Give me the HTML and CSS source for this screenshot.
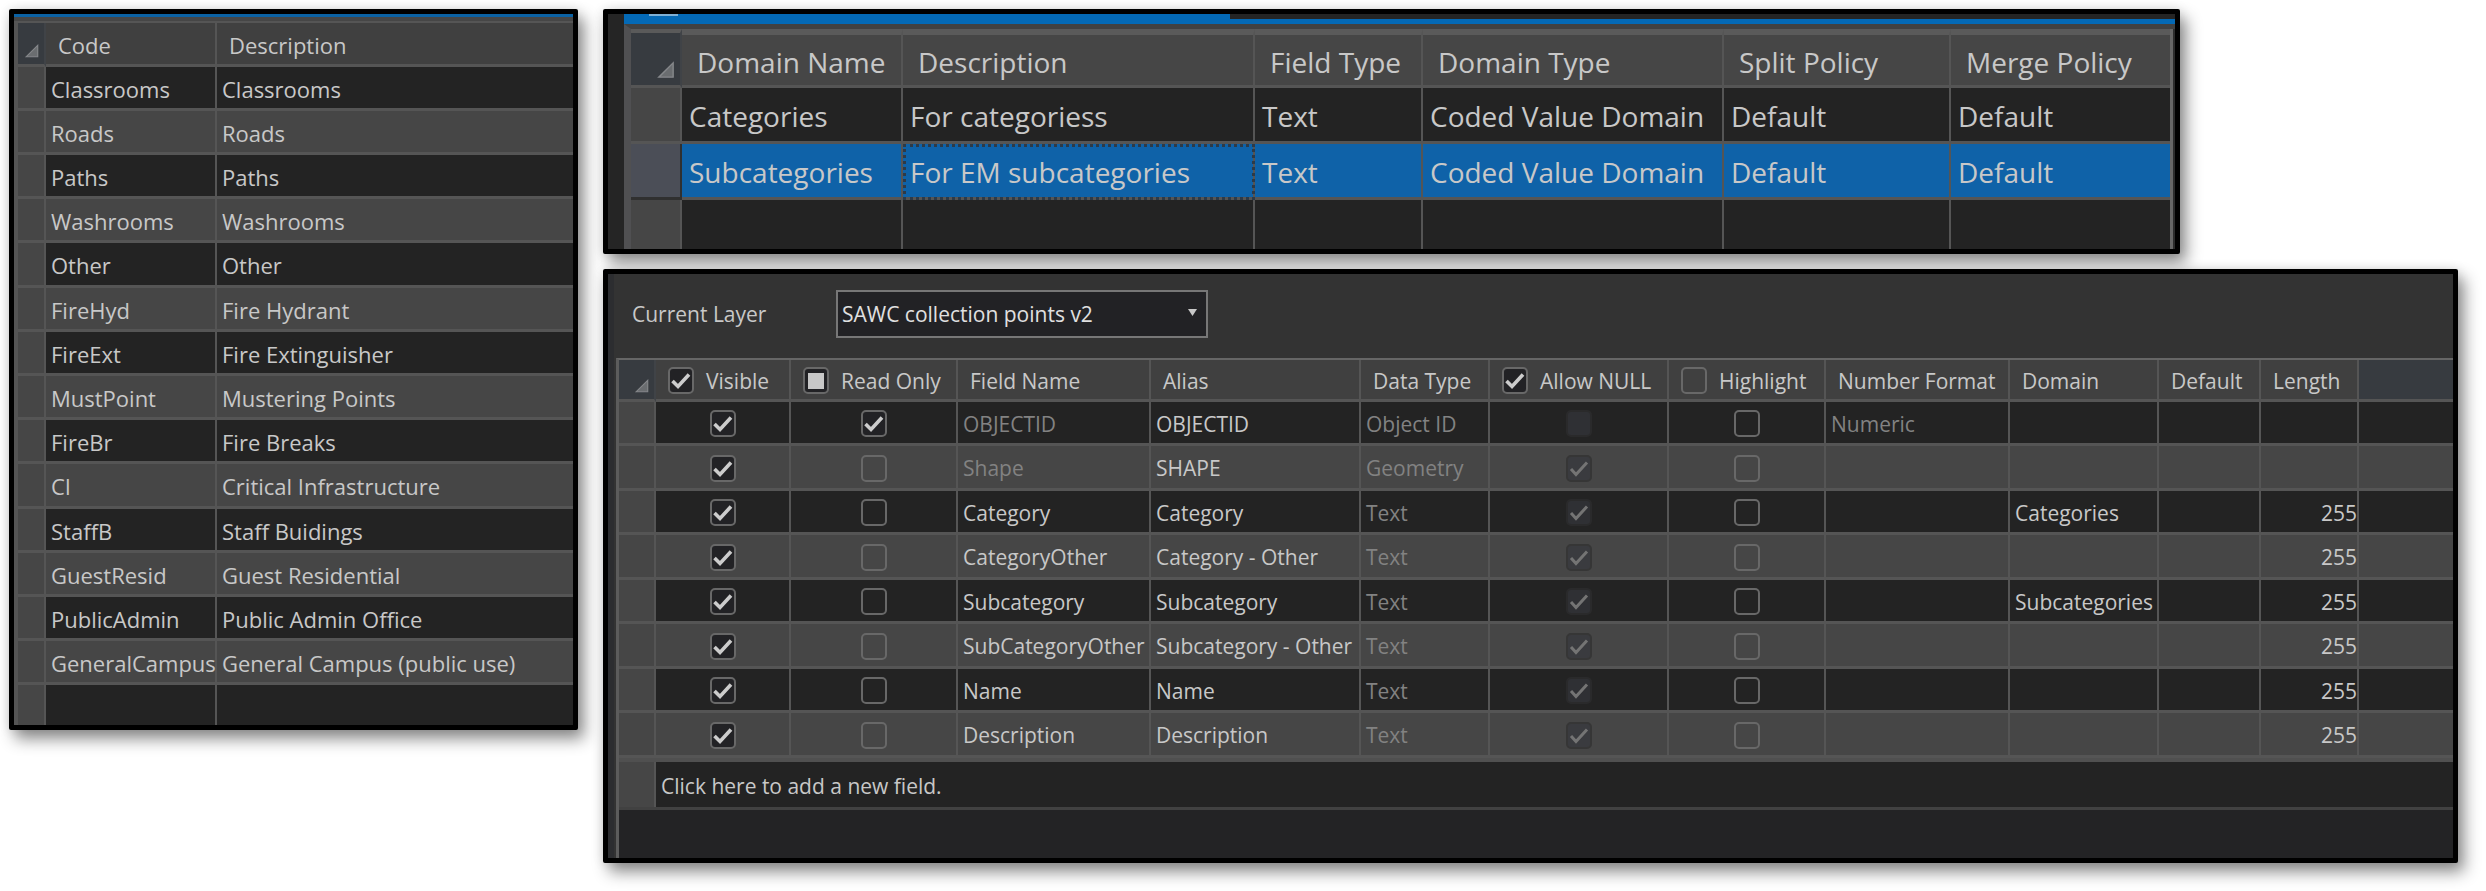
FILE: index.html
```html
<!DOCTYPE html>
<html lang="en">
<head>
<meta charset="utf-8">
<title>Fields and domains</title>
<link rel="stylesheet" href="styles.css">
</head>
<body>
<main class="board">
  <section class="panel codes">
    <div class="accent"></div>
    <table class="grid codes-grid">
      <colgroup><col class="c-mark"><col class="c-code"><col></colgroup>
      <thead>
        <tr><th class="corner"><svg class="tri" viewBox="0 0 14 14"><path d="M12 2v10H2z"/></svg></th><th>Code</th><th>Description</th></tr>
      </thead>
      <tbody>
        <tr><td class="mark"></td><td>Classrooms</td><td>Classrooms</td></tr>
        <tr><td class="mark"></td><td>Roads</td><td>Roads</td></tr>
        <tr><td class="mark"></td><td>Paths</td><td>Paths</td></tr>
        <tr><td class="mark"></td><td>Washrooms</td><td>Washrooms</td></tr>
        <tr><td class="mark"></td><td>Other</td><td>Other</td></tr>
        <tr><td class="mark"></td><td>FireHyd</td><td>Fire Hydrant</td></tr>
        <tr><td class="mark"></td><td>FireExt</td><td>Fire Extinguisher</td></tr>
        <tr><td class="mark"></td><td>MustPoint</td><td>Mustering Points</td></tr>
        <tr><td class="mark"></td><td>FireBr</td><td>Fire Breaks</td></tr>
        <tr><td class="mark"></td><td>CI</td><td>Critical Infrastructure</td></tr>
        <tr><td class="mark"></td><td>StaffB</td><td>Staff Buidings</td></tr>
        <tr><td class="mark"></td><td>GuestResid</td><td>Guest Residential</td></tr>
        <tr><td class="mark"></td><td>PublicAdmin</td><td>Public Admin Office</td></tr>
        <tr><td class="mark"></td><td>GeneralCampus</td><td>General Campus (public use)</td></tr>
        <tr class="last"><td class="mark"></td><td></td><td></td></tr>
      </tbody>
    </table>
  </section>

  <div class="side">
    <section class="panel domains">
      <div class="tabs"><div class="tab"><span class="tab-icon"></span></div><div class="tab-rest"></div></div>
      <div class="domains-body">
        <table class="grid domains-grid">
          <colgroup><col class="c-mark"><col class="c-name"><col class="c-desc"><col class="c-field"><col class="c-type"><col class="c-split"><col></colgroup>
          <thead>
            <tr><th class="corner"><svg class="tri" viewBox="0 0 14 14"><path d="M12 2v10H2z"/></svg></th><th>Domain Name</th><th>Description</th><th>Field Type</th><th>Domain Type</th><th>Split Policy</th><th>Merge Policy</th></tr>
          </thead>
          <tbody>
            <tr><td class="mark"></td><td>Categories</td><td>For categoriess</td><td>Text</td><td>Coded Value Domain</td><td>Default</td><td>Default</td></tr>
            <tr class="selected"><td class="mark"></td><td>Subcategories</td><td class="focus">For EM subcategories</td><td>Text</td><td>Coded Value Domain</td><td>Default</td><td>Default</td></tr>
            <tr class="last"><td class="mark"></td><td></td><td></td><td></td><td></td><td></td><td></td></tr>
          </tbody>
        </table>
      </div>
    </section>

    <section class="panel fields">
      <div class="toolbar">
        <label for="layer">Current Layer</label>
        <select id="layer" class="layer"><option>SAWC collection points v2</option></select>
      </div>
      <div class="fields-body">
        <table class="grid fields-grid">
          <colgroup><col class="c-mark"><col class="c-vis"><col class="c-ro"><col class="c-name"><col class="c-alias"><col class="c-type"><col class="c-null"><col class="c-high"><col class="c-num"><col class="c-dom"><col class="c-def"><col class="c-len"><col></colgroup>
          <thead>
            <tr>
              <th class="corner"><svg class="tri" viewBox="0 0 14 14"><path d="M12 2v10H2z"/></svg></th>
              <th class="with-box"><label><input class="box" type="checkbox" checked>Visible</label></th>
              <th class="with-box"><label><input class="box partial" type="checkbox">Read Only</label></th>
              <th>Field Name</th><th>Alias</th><th>Data Type</th>
              <th class="with-box"><label><input class="box" type="checkbox" checked>Allow NULL</label></th>
              <th class="with-box"><label><input class="box" type="checkbox">Highlight</label></th>
              <th>Number Format</th><th>Domain</th><th>Default</th><th>Length</th><th class="filler"></th>
            </tr>
          </thead>
          <tbody>
            <tr><td class="mark"></td><td class="tick"><input class="box" type="checkbox" aria-label="Visible" checked></td><td class="tick"><input class="box" type="checkbox" aria-label="Read only" checked></td><td class="dim">OBJECTID</td><td>OBJECTID</td><td class="dim">Object ID</td><td class="tick"><input class="box" type="checkbox" aria-label="Allow null" disabled></td><td class="tick"><input class="box" type="checkbox" aria-label="Highlight"></td><td class="dim">Numeric</td><td></td><td></td><td class="num"></td><td></td></tr>
            <tr><td class="mark"></td><td class="tick"><input class="box" type="checkbox" aria-label="Visible" checked></td><td class="tick"><input class="box" type="checkbox" aria-label="Read only"></td><td class="dim">Shape</td><td>SHAPE</td><td class="dim">Geometry</td><td class="tick"><input class="box" type="checkbox" aria-label="Allow null" checked disabled></td><td class="tick"><input class="box" type="checkbox" aria-label="Highlight"></td><td></td><td></td><td></td><td class="num"></td><td></td></tr>
            <tr><td class="mark"></td><td class="tick"><input class="box" type="checkbox" aria-label="Visible" checked></td><td class="tick"><input class="box" type="checkbox" aria-label="Read only"></td><td>Category</td><td>Category</td><td class="dim">Text</td><td class="tick"><input class="box" type="checkbox" aria-label="Allow null" checked disabled></td><td class="tick"><input class="box" type="checkbox" aria-label="Highlight"></td><td></td><td>Categories</td><td></td><td class="num">255</td><td></td></tr>
            <tr><td class="mark"></td><td class="tick"><input class="box" type="checkbox" aria-label="Visible" checked></td><td class="tick"><input class="box" type="checkbox" aria-label="Read only"></td><td>CategoryOther</td><td>Category - Other</td><td class="dim">Text</td><td class="tick"><input class="box" type="checkbox" aria-label="Allow null" checked disabled></td><td class="tick"><input class="box" type="checkbox" aria-label="Highlight"></td><td></td><td></td><td></td><td class="num">255</td><td></td></tr>
            <tr><td class="mark"></td><td class="tick"><input class="box" type="checkbox" aria-label="Visible" checked></td><td class="tick"><input class="box" type="checkbox" aria-label="Read only"></td><td>Subcategory</td><td>Subcategory</td><td class="dim">Text</td><td class="tick"><input class="box" type="checkbox" aria-label="Allow null" checked disabled></td><td class="tick"><input class="box" type="checkbox" aria-label="Highlight"></td><td></td><td>Subcategories</td><td></td><td class="num">255</td><td></td></tr>
            <tr><td class="mark"></td><td class="tick"><input class="box" type="checkbox" aria-label="Visible" checked></td><td class="tick"><input class="box" type="checkbox" aria-label="Read only"></td><td>SubCategoryOther</td><td>Subcategory - Other</td><td class="dim">Text</td><td class="tick"><input class="box" type="checkbox" aria-label="Allow null" checked disabled></td><td class="tick"><input class="box" type="checkbox" aria-label="Highlight"></td><td></td><td></td><td></td><td class="num">255</td><td></td></tr>
            <tr><td class="mark"></td><td class="tick"><input class="box" type="checkbox" aria-label="Visible" checked></td><td class="tick"><input class="box" type="checkbox" aria-label="Read only"></td><td>Name</td><td>Name</td><td class="dim">Text</td><td class="tick"><input class="box" type="checkbox" aria-label="Allow null" checked disabled></td><td class="tick"><input class="box" type="checkbox" aria-label="Highlight"></td><td></td><td></td><td></td><td class="num">255</td><td></td></tr>
            <tr><td class="mark"></td><td class="tick"><input class="box" type="checkbox" aria-label="Visible" checked></td><td class="tick"><input class="box" type="checkbox" aria-label="Read only"></td><td>Description</td><td>Description</td><td class="dim">Text</td><td class="tick"><input class="box" type="checkbox" aria-label="Allow null" checked disabled></td><td class="tick"><input class="box" type="checkbox" aria-label="Highlight"></td><td></td><td></td><td></td><td class="num">255</td><td></td></tr>
          </tbody>
        </table>
        <div class="add-row"><span class="add-mark"></span><button class="add" type="button">Click here to add a new field.</button></div>
      </div>
    </section>
  </div>
</main>
</body>
</html>
```
FILE: styles.css
```css
* { box-sizing: border-box; }

:root {
  --line: #555;
  --dark: #232323;
  --light: #464646;
  --text: #c8c8c8;
  --dim: #828282;
  --blue: #0f62a8;
}

body {
  margin: 0;
  background: #fff;
  color: var(--text);
  font: 21px/28px "Open Sans", "Noto Sans", sans-serif;
}

.board {
  display: grid;
  grid-template-columns: 569fr 1855fr;
  gap: 25px;
  align-items: start;
  padding: 9px 28px 28px 9px;
}

.side {
  display: flex;
  flex-direction: column;
  gap: 15px;
  min-width: 0;
}

.panel {
  border: 5px solid #000;
  border-radius: 2px;
  overflow: hidden;
  box-shadow: 6px 9px 16px rgba(0, 0, 0, .45), 0 0 12px rgba(0, 0, 0, .1);
}

/* shared data grid */
.grid {
  width: 100%;
  table-layout: fixed;
  border-collapse: separate;
  border-spacing: 0;
}

.grid th,
.grid td {
  height: 44px;
  padding: 2px 0 0 5px;
  border-right: 2px solid var(--line);
  border-bottom: 3px solid var(--line);
  text-align: left;
  font-weight: 400;
  white-space: nowrap;
}

.grid th {
  padding-left: 12px;
  background: #404040;
}

.grid th:last-child,
.grid td:last-child { border-right: 0; }

.grid tbody tr { background: var(--dark); }
.grid tbody tr:nth-child(even) { background: var(--light); }
.grid .mark { background: var(--light); }

.grid .corner {
  padding: 0 4px 5px 0;
  background: #373b40;
  border-right-color: #404347;
  text-align: right;
  vertical-align: bottom;
}

.grid .last td { border-bottom: 0; }

.tri {
  display: block;
  width: 16px;
  height: 16px;
  margin-left: auto;
  fill: #6a6d70;
  stroke: #85878a;
  stroke-width: 1;
}

/* code list */
.codes {
  background: var(--light);
  font-size: 22px;
}
.codes .accent {
  height: 9px;
  border-top: 3px solid #0b62a4;
  border-bottom: 2px solid var(--line);
}
.codes-grid { border-left: 4px solid #545454; }
.codes-grid .c-mark { width: 28px; }
.codes-grid .c-code { width: 171px; }
.codes-grid tbody tr:nth-child(5n) td { height: 45px; }
.codes-grid tbody .last td,
.codes-grid tbody tr.last:nth-child(5n) td { height: 40px; }

/* domain list */
.domains {
  width: 85%;
  padding-left: 16px;
  background: #252525;
  font-size: 28px;
  line-height: 36px;
}
.tabs {
  display: flex;
  height: 10px;
}
.tab {
  width: 606px;
  padding-left: 25px;
  background: #0469b5;
}
.tab-icon {
  display: block;
  width: 29px;
  height: 2px;
  background: #7fb0d4;
}
.tab-rest {
  flex: 1;
  border-bottom: 5px solid #0469b5;
}
.domains-body {
  padding-right: 5px;
  border-top: 5px solid #414141;
  border-left: 7px solid #505052;
  background: linear-gradient(to right, transparent calc(100% - 5px), #666 calc(100% - 5px), #666 calc(100% - 2px), #2c2c2c calc(100% - 2px));
}
.domains-grid th,
.domains-grid td {
  height: 56px;
  padding-top: 3px;
}
.domains-grid th {
  height: 59px;
  padding-left: 15px;
  border-top: 6px solid #5a5a5a;
  background: var(--light);
}
.domains-grid .corner { border-top-width: 4px; }
.domains-grid .tri { width: 20px; height: 20px; }
.domains-grid .c-mark { width: 51px; }
.domains-grid .c-name { width: 221px; }
.domains-grid .c-desc { width: 352px; }
.domains-grid .c-field { width: 168px; }
.domains-grid .c-type { width: 301px; }
.domains-grid .c-split { width: 227px; }
.domains-grid td { padding-left: 7px; }
.domains-grid tbody tr.selected { background: var(--blue); }
.domains-grid .selected .mark {
  background: #4b4e57;
  border-color: #303030;
}
.domains-grid .focus {
  outline: 3px dotted #2d3a48;
  outline-offset: -3px;
}
.domains-grid .last td { height: 49px; }

/* field list */
.fields {
  padding-left: 6px;
  background: #333;
  box-shadow: inset 6px 0 0 #2c2d30, 6px 9px 16px rgba(0, 0, 0, .45), 0 0 12px rgba(0, 0, 0, .1);
}
.toolbar {
  display: flex;
  align-items: center;
  height: 84px;
  padding: 0 0 4px 18px;
}
.toolbar label { width: 204px; }
.layer {
  width: 372px;
  height: 48px;
  padding: 0 32px 0 4px;
  border: 2px solid #777;
  border-radius: 0;
  appearance: none;
  background: #222225 url("data:image/svg+xml,%3Csvg xmlns='http://www.w3.org/2000/svg' width='9' height='7'%3E%3Cpath d='M0 0h9L4.500 7z' fill='%23c8c8c8'/%3E%3C/svg%3E") no-repeat right 9px top 17px;
  color: #e0e0e0;
  font: inherit;
}
.fields-body {
  min-height: 500px;
  margin-left: 2px;
  border-top: 2px solid #666;
  border-left: 3px solid #5c5c5c;
  background: #232325;
}
.fields-grid .c-mark { width: 37px; }
.fields-grid .c-vis { width: 135px; }
.fields-grid .c-ro { width: 167px; }
.fields-grid .c-name { width: 193px; }
.fields-grid .c-alias { width: 210px; }
.fields-grid .c-type { width: 129px; }
.fields-grid .c-null { width: 179px; }
.fields-grid .c-high { width: 157px; }
.fields-grid .c-num { width: 184px; }
.fields-grid .c-dom { width: 149px; }
.fields-grid .c-def { width: 102px; }
.fields-grid .c-len { width: 98px; }
.fields-grid th { height: 42px; }
.fields-grid tbody tr:nth-child(even) td { height: 45px; }
.fields-grid .filler { background: #373b40; }
.fields-grid .dim { color: var(--dim); }
.fields-grid .num { padding-left: 0; text-align: right; }
.fields-grid .tick { padding: 0; text-align: center; }
.fields-grid .with-box label {
  display: flex;
  align-items: center;
  gap: 12px;
}

.box {
  display: inline-block;
  flex: none;
  width: 26px;
  height: 27px;
  margin: 0;
  border: 2px solid #686868;
  border-radius: 5px;
  appearance: none;
  background: transparent center / 22px 23px no-repeat;
  vertical-align: middle;
}
.box:checked {
  background-color: #222225;
  background-image: url("data:image/svg+xml,%3Csvg xmlns='http://www.w3.org/2000/svg' viewBox='0 0 22 23'%3E%3Cpath d='M2.500 12l5.500 5.500L19 5.500' fill='none' stroke='%23cccccc' stroke-width='3.600'/%3E%3C/svg%3E");
}
.box:disabled {
  border-color: #2a2a2b;
  background-color: #2f3034;
}
.box:disabled:checked {
  background-image: url("data:image/svg+xml,%3Csvg xmlns='http://www.w3.org/2000/svg' viewBox='0 0 22 23'%3E%3Cpath d='M3 12l5 5.500L19 5.500' fill='none' stroke='%23747474' stroke-width='3'/%3E%3C/svg%3E");
}
tr:nth-child(even) .box:disabled {
  border-color: #363636;
  background-color: #3a3b3f;
}
.box.partial {
  background-color: #222225;
  background-image: linear-gradient(#c8c8c8, #c8c8c8);
  background-size: 16px 16px;
}

.add-row {
  display: flex;
  height: 52px;
  border-top: 4px solid #505050;
  border-bottom: 3px solid #414141;
  background: var(--dark);
}
.add-mark {
  width: 37px;
  border-right: 2px solid var(--line);
  background: var(--light);
}
.add {
  flex: 1;
  padding: 2px 0 0 5px;
  border: 0;
  background: none;
  color: inherit;
  font: inherit;
  text-align: left;
}
```
